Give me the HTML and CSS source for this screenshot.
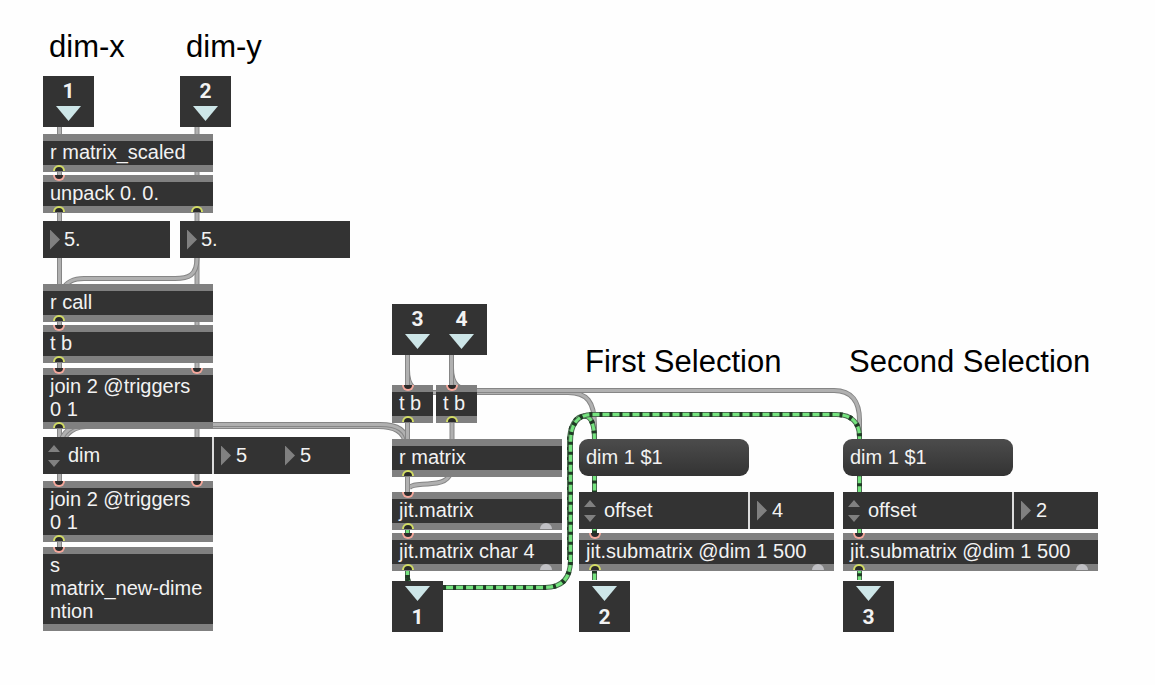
FILE: index.html
```html
<!DOCTYPE html>
<html lang="en">
<head>
<meta charset="utf-8">
<title>Matrix patcher</title>
<link rel="stylesheet" href="styles.css">
</head>
<body>
<main class="patcher">
  <svg class="cables" aria-hidden="true">
    <defs>
      <path id="c1" d="M59.5 127V552"/>
      <path id="c2" d="M197 127V485"/>
      <path id="c3" d="M197 258C197 276 188 278.500 175 278.500H84C74 278.500 67 281 62 290"/>
      <path id="c4" d="M59 452C60 436 66 427 82 424.500H380C398 424.500 407 430 408 445"/>
      <path id="c5" d="M59 458C60 438 70 427 86 426.500H378C394 426.500 404 431 406 445"/>
      <path id="c6" d="M407.500 355V387"/>
      <path id="c7" d="M451.500 355V387"/>
      <path id="c8" d="M407.500 355V370C407.500 387 415 392.500 430 392.500H568C587 392.500 594.500 402 594.500 425V445"/>
      <path id="c9" d="M451.500 355V368C451.500 385 459 390.500 474 390.500H834C852 390.500 859.500 402 859.500 420V445"/>
      <path id="c10" d="M407.500 420V496"/>
      <path id="c11" d="M452 420V465C452 478 445 483 432 483.500C420 485 412 484 409 488"/>
      <path id="g1" d="M407.500 525V585"/>
      <path id="g2" d="M407.500 578C408 585 415 587.500 425 587.500H545C564 587.500 570.500 576 570.500 560V442C570.500 424 578 414.500 592 414.500H836C853 414.500 859.500 424 859.500 437V580"/>
      <path id="g3" d="M569.500 560V442C569.500 426 576 416 584 416C592 416 594.500 426 594.500 440V580"/>
    </defs>
    <g class="cable-edge"><use href="#c1"/><use href="#c2"/></g>
    <g class="cable-core"><use href="#c1"/><use href="#c2"/></g>
    <use class="cable-edge" href="#c3"/><use class="cable-core" href="#c3"/>
    <use class="cable-edge" href="#c5"/><use class="cable-core" href="#c5"/>
    <use class="cable-edge" href="#c4"/><use class="cable-core" href="#c4"/>
    <use class="cable-edge" href="#c8"/><use class="cable-core" href="#c8"/>
    <use class="cable-edge" href="#c9"/><use class="cable-core" href="#c9"/>
    <use class="cable-edge" href="#c6"/><use class="cable-core" href="#c6"/>
    <use class="cable-edge" href="#c7"/><use class="cable-core" href="#c7"/>
    <use class="cable-edge" href="#c11"/><use class="cable-core" href="#c11"/>
    <use class="cable-edge" href="#c10"/><use class="cable-core" href="#c10"/>
    <use class="matrix-edge" href="#g1"/><use class="matrix-core" href="#g1"/><use class="matrix-dash" href="#g1"/>
    <use class="matrix-edge" href="#g3"/><use class="matrix-core" href="#g3"/><use class="matrix-dash" href="#g3"/>
    <use class="matrix-edge" href="#g2"/><use class="matrix-core" href="#g2"/><use class="matrix-dash" href="#g2"/>
  </svg>

  <div class="comment at-dim-x">dim-x</div>
  <div class="comment at-dim-y">dim-y</div>
  <div class="comment at-first">First Selection</div>
  <div class="comment at-second">Second Selection</div>

  <div class="terminal at-in-1">1<i class="arrow"></i></div>
  <div class="terminal at-in-2">2<i class="arrow"></i></div>
  <div class="terminal at-in-3">3<i class="arrow"></i></div>
  <div class="terminal at-in-4">4<i class="arrow"></i></div>

  <div class="object at-scaled">r matrix_scaled<i class="port out"></i></div>
  <div class="object at-unpack">unpack 0. 0.<i class="port in"></i><i class="port out"></i><i class="port out last"></i></div>

  <label class="number at-num-x"><i class="marker"></i><input class="value" type="text" value="5." aria-label="dim-x value"></label>
  <label class="number number-wide at-num-y"><i class="marker"></i><input class="value" type="text" value="5." aria-label="dim-y value"></label>

  <div class="object at-call">r call<i class="port out"></i></div>
  <div class="object at-tb-1">t b<i class="port in"></i><i class="port out"></i></div>
  <div class="object at-join-1">join 2 @triggers 0 1<i class="port in"></i><i class="port in last"></i><i class="port out"></i></div>

  <div class="attr attr-dim at-attr-dim">
    <label class="attr-name">
      <svg class="stepper" viewBox="0 0 12 22" aria-hidden="true"><path d="M6 0L12 7H0ZM6 22L0 15H12Z"/></svg>
      <select class="picker" aria-label="Attribute"><option>dim</option></select>
    </label>
    <label class="attr-value attr-value-narrow"><i class="marker"></i><input class="value" type="text" value="5" aria-label="dim width"></label>
    <label class="attr-value"><i class="marker"></i><input class="value" type="text" value="5" aria-label="dim height"></label>
  </div>

  <div class="object at-join-2">join 2 @triggers 0 1<i class="port in"></i><i class="port in last"></i><i class="port out"></i></div>
  <div class="object at-send">s<br>matrix_new-dime<br>ntion<i class="port in"></i></div>

  <div class="object object-small at-tb-2">t b<i class="port in"></i><i class="port out"></i></div>
  <div class="object object-small at-tb-3">t b<i class="port in"></i><i class="port out"></i></div>
  <div class="object at-matrix">r matrix<i class="port out"></i></div>
  <div class="object at-jit">jit.matrix<i class="port in"></i><i class="port out"></i><i class="port dump"></i></div>
  <div class="object at-jit-char">jit.matrix char 4<i class="port in"></i><i class="port out"></i><i class="port dump"></i></div>
  <div class="terminal outlet at-out-1"><i class="arrow"></i>1</div>

  <button class="message at-msg-1" type="button">dim 1 $1</button>
  <div class="attr at-attr-1">
    <label class="attr-name">
      <svg class="stepper" viewBox="0 0 12 22" aria-hidden="true"><path d="M6 0L12 7H0ZM6 22L0 15H12Z"/></svg>
      <select class="picker" aria-label="Attribute"><option>offset</option></select>
    </label>
    <label class="attr-value"><i class="marker"></i><input class="value" type="text" value="4" aria-label="First offset"></label>
  </div>
  <div class="object object-wide at-sub-1">jit.submatrix @dim 1 500<i class="port in"></i><i class="port out"></i><i class="port dump"></i></div>
  <div class="terminal outlet at-out-2"><i class="arrow"></i>2</div>

  <button class="message at-msg-2" type="button">dim 1 $1</button>
  <div class="attr at-attr-2">
    <label class="attr-name">
      <svg class="stepper" viewBox="0 0 12 22" aria-hidden="true"><path d="M6 0L12 7H0ZM6 22L0 15H12Z"/></svg>
      <select class="picker" aria-label="Attribute"><option>offset</option></select>
    </label>
    <label class="attr-value"><i class="marker"></i><input class="value" type="text" value="2" aria-label="Second offset"></label>
  </div>
  <div class="object object-wide at-sub-2">jit.submatrix @dim 1 500<i class="port in"></i><i class="port out"></i><i class="port dump"></i></div>
  <div class="terminal outlet at-out-3"><i class="arrow"></i>3</div>
</main>
</body>
</html>
```
FILE: styles.css
```css
* { box-sizing: border-box; }

body {
  margin: 0;
  background: #fefefe;
  color: #f2f2f2;
  font: 20px/23px "Liberation Sans", Arial, sans-serif;
}

.patcher {
  position: relative;
  min-height: 100vh;
}

/* Cables */
.cables {
  position: absolute;
  inset: 0;
  width: 100%;
  height: 100%;
  fill: none;
}
.cable-edge { stroke: #868686; stroke-width: 5; }
.cable-core { stroke: #b0b0b0; stroke-width: 3; }
.matrix-edge { stroke: #4a6b4f; stroke-width: 5; }
.matrix-core { stroke: #74e47e; stroke-width: 3; }
.matrix-dash { stroke: #203a25; stroke-width: 5; stroke-dasharray: 3 7; }

/* Nodes on the canvas */
.comment, .terminal, .object, .number, .attr, .message { position: absolute; }

.comment {
  color: #000;
  font-size: 31px;
  line-height: 36px;
  white-space: nowrap;
}

.terminal {
  display: flex;
  flex-direction: column;
  align-items: center;
  gap: 3px;
  width: 51px;
  height: 51px;
  padding-top: 4px;
  background: #333;
  font-family: Roboto, sans-serif;
  font-size: 21px;
  font-weight: 700;
}
.outlet { padding-top: 5px; gap: 5px; }
.arrow {
  width: 25px;
  height: 15px;
  background: #cde6e8;
  clip-path: polygon(0 0, 100% 0, 50% 100%);
}

.object {
  width: 170px;
  padding: 0 7px 1px;
  border: solid #808080;
  border-width: 7px 0;
  background: #333;
}
.object-small { width: 41px; }
.object-wide { width: 255px; }

.port {
  position: absolute;
  left: 10px;
  width: 12px;
  height: 6px;
  border: 2px solid;
  background: #2b2b2b;
}
.in { top: -7px; border-color: #f6a89c; border-top: 0; border-radius: 0 0 6px 6px; }
.out { bottom: -6px; border-color: #d3dd63; border-bottom: 0; border-radius: 6px 6px 0 0; }
.last { left: 148px; }
.dump {
  left: auto;
  right: 10px;
  bottom: -6px;
  border: 0;
  border-radius: 6px 6px 0 0;
  background: #c0c0c4;
}

.number, .attr-value {
  display: flex;
  align-items: center;
  gap: 4px;
  height: 37px;
  padding-left: 7px;
  background: #333;
}
.number { width: 127px; }
.number-wide { width: 170px; }
.marker {
  flex: none;
  width: 10px;
  height: 20px;
  background: #808080;
  clip-path: polygon(0 0, 100% 50%, 0 100%);
}
.value, .picker {
  flex: 1;
  min-width: 0;
  width: 100%;
  height: 37px;
  margin: 0;
  padding: 0;
  border: 0;
  background: transparent;
  color: inherit;
  font: inherit;
  appearance: none;
}

.attr {
  display: flex;
  width: 255px;
  background: #333;
}
.attr-dim { width: 307px; }
.attr-name {
  display: flex;
  align-items: center;
  gap: 8px;
  width: 171px;
  padding-left: 5px;
  border-right: 2px solid #dcdcdc;
}
.stepper { flex: none; width: 12px; height: 22px; fill: #808080; }
.attr-value { flex: 1; gap: 5px; }
.attr-value-narrow { flex: 0 0 64px; }

.message {
  width: 170px;
  height: 37px;
  padding: 0 7px;
  border: 0;
  border-radius: 9px;
  background: linear-gradient(#4c4c4c, #333);
  color: inherit;
  font: inherit;
  text-align: left;
}

/* Node positions */
.at-dim-x { left: 49px; top: 29px; }
.at-dim-y { left: 186px; top: 29px; }
.at-first { left: 585px; top: 344px; }
.at-second { left: 849px; top: 344px; }

.at-in-1 { left: 43px; top: 76px; }
.at-in-2 { left: 180px; top: 76px; }
.at-in-3 { left: 392px; top: 304px; }
.at-in-4 { left: 436px; top: 304px; }

.at-scaled { left: 43px; top: 134px; }
.at-unpack { left: 43px; top: 175px; }
.at-num-x { left: 43px; top: 221px; }
.at-num-y { left: 180px; top: 221px; }
.at-call { left: 43px; top: 284px; }
.at-tb-1 { left: 43px; top: 325px; }
.at-join-1 { left: 43px; top: 368px; }
.at-attr-dim { left: 43px; top: 437px; }
.at-join-2 { left: 43px; top: 481px; }
.at-send { left: 43px; top: 547px; }

.at-tb-2 { left: 392px; top: 385px; }
.at-tb-3 { left: 436px; top: 385px; }
.at-matrix { left: 392px; top: 439px; }
.at-jit { left: 392px; top: 492px; }
.at-jit-char { left: 392px; top: 533px; }
.at-out-1 { left: 392px; top: 581px; }

.at-msg-1 { left: 579px; top: 439px; }
.at-attr-1 { left: 579px; top: 492px; }
.at-sub-1 { left: 579px; top: 533px; }
.at-out-2 { left: 579px; top: 581px; }

.at-msg-2 { left: 843px; top: 439px; }
.at-attr-2 { left: 843px; top: 492px; }
.at-sub-2 { left: 843px; top: 533px; }
.at-out-3 { left: 843px; top: 581px; }
```
